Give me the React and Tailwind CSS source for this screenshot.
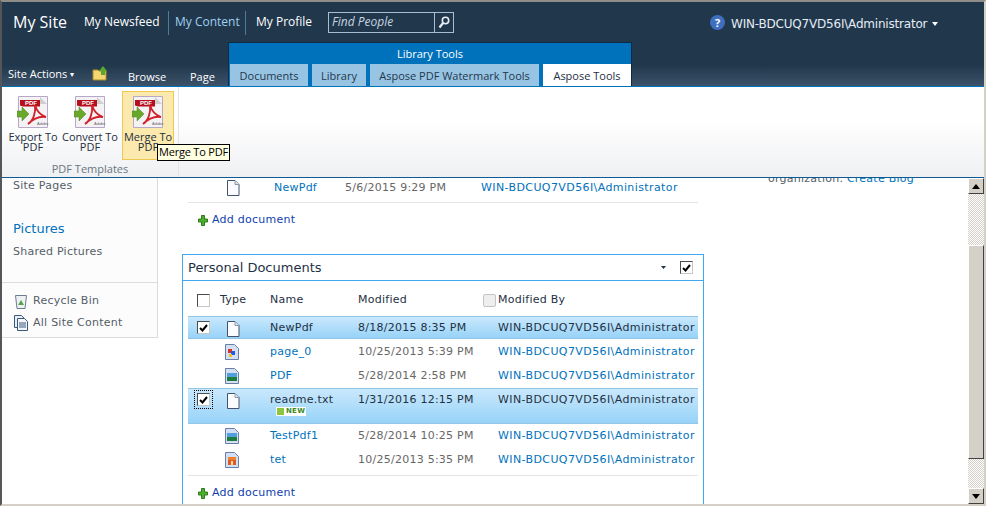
import React from 'react';

const PdfIcon = () => (
  <svg width="32" height="32" viewBox="0 0 32 32" className="block">
    <path d="M1.500 .5h29v31h-29z" fill="#f4f2f4" stroke="#b7a8c8" />
    <path d="M23 1l7 7h-7z" fill="#cfcfcf" />
    <path d="M3 4h20v6.500H6l-3-1z" fill="#b50f1c" />
    <text x="8" y="9" fontSize="6" fontWeight="700" fill="#fff" fontFamily="Liberation Sans, sans-serif">PDF</text>
    <path d="M11 28c5-3 8-11 7-19 2 7 5 10 11 12-6-1-12 1-18 7z" fill="none" stroke="#d0202a" strokeWidth="1.800" />
    <path d="M0 15h5v-4l7 7-7 7v-4H0z" fill="#6aa82c" stroke="#4d8a1c" strokeWidth=".5" />
    <text x="20" y="29" fontSize="4" fill="#666" fontFamily="Liberation Sans, sans-serif">Adobe</text>
  </svg>
);

const BlankFile = () => (
  <svg width="14" height="16" viewBox="0 0 14 16" className="block">
    <path d="M1.500 .5h7.500l4 4v11h-11.500z" fill="#fbfcff" stroke="#44546a" />
    <path d="M9 .5v4h4" fill="#dfe6ee" stroke="#8898ac" />
  </svg>
);

const ImgFile = ({ kind }) => (
  <svg width="14" height="16" viewBox="0 0 14 16" className="block">
    <path d="M.5 .5h9l4 4v11H.5z" fill="#d5dff4" stroke="#6a7fa8" />
    {kind === 'page' && (
      <>
        <rect x="3" y="5" width="4" height="4" fill="#e03020" />
        <rect x="6" y="7" width="4" height="4" fill="#2060e0" />
        <rect x="4" y="10" width="3" height="3" fill="#f0c020" />
      </>
    )}
    {kind === 'land' && (
      <>
        <rect x="2" y="5" width="10" height="4" fill="#50a0e0" />
        <rect x="2" y="9" width="10" height="4" fill="#1c7c3c" />
      </>
    )}
    {kind === 'tet' && (
      <>
        <rect x="3" y="5" width="8" height="3" fill="#f08030" />
        <rect x="3" y="8" width="8" height="5" fill="#d85c20" />
        <rect x="6" y="9" width="2" height="4" fill="#f5d8b0" />
      </>
    )}
  </svg>
);

const Plus = () => (
  <svg width="10" height="11" viewBox="0 0 10 11" className="block">
    <path d="M3.500 .5h3v3.500h3v3h-3v3.500h-3v-3.500h-3v-3h3z" fill="#4cae2c" stroke="#2f7d1a" />
  </svg>
);

const Check = ({ on }) => (
  <span className="w-[13px] h-[13px] bg-white border border-[#4c4c4c] border-r-[#c8c8c0] border-b-[#c8c8c0] flex items-center justify-center">
    {on && (
      <svg width="9" height="8" viewBox="0 0 9 8">
        <path d="M1 4l2.500 2.500L8 1" fill="none" stroke="#000" strokeWidth="2" />
      </svg>
    )}
  </span>
);

const ScrollBtn = ({ up }) => (
  <div className="h-[16px] w-[16px] bg-[#d4d0c8] border border-t-white border-l-white border-r-[#404040] border-b-[#404040] flex items-center justify-center shrink-0">
    <svg width="8" height="5" viewBox="0 0 8 5">
      <path d={up ? 'M4 0l4 5H0z' : 'M0 0h8L4 5z'} fill="#000" />
    </svg>
  </div>
);

const Link = 'text-[#0072bc]';
const AUTHOR = 'WIN-BDCUQ7VD56I\\Administrator';

const docs = [
  { name: 'page_0', date: '10/25/2013 5:39 PM', kind: 'page' },
  { name: 'PDF', date: '5/28/2014 2:58 PM', kind: 'land' },
];
const docs2 = [
  { name: 'TestPdf1', date: '5/28/2014 10:25 PM', kind: 'land' },
  { name: 'tet', date: '10/25/2013 5:35 PM', kind: 'tet' },
];

const PlainRow = ({ d }) => (
  <div className="h-[24px] flex items-center pt-[2px]">
    <div className="w-[37px]" />
    <div className="w-[45px]"><ImgFile kind={d.kind} /></div>
    <div className={`w-[88px] ${Link}`}>{d.name}</div>
    <div className="w-[140px] text-[#676767]">{d.date}</div>
    <div className={`tracking-[0.4px] ${Link}`}>{AUTHOR}</div>
  </div>
);

const SelectedRow = ({ height, name, date, isNew, dotted }) => (
  <div
    style={{ height }}
    className="flex items-start bg-gradient-to-b from-[#c9e8fc] to-[#97d3f8] border-y border-[#92c5e6] text-[#1f3144] pt-[2px]"
  >
    <div className="w-[36px] pl-[9px] pt-[2px]">
      <div className={dotted ? 'outline outline-1 outline-dotted outline-black outline-offset-[2px] w-[13px]' : 'w-[13px]'}>
        <Check on />
      </div>
    </div>
    <div className="w-[46px] pl-[2px] pt-[2px]"><BlankFile /></div>
    <div className="w-[88px]">
      <div className="leading-[18px]">{name}</div>
      {isNew && (
        <div className="-mt-[2px] ml-[6px] w-[30px] h-[9px] bg-white flex items-center gap-[2px] pl-px text-[7px] leading-none font-bold text-[#3c8a1e]">
          <span className="w-[7px] h-[7px] bg-[#8cc63f] shrink-0" />
          NEW
        </div>
      )}
    </div>
    <div className="w-[140px] leading-[18px]">{date}</div>
    <div className="leading-[18px] tracking-[0.4px]">{AUTHOR}</div>
  </div>
);

const Tab = ({ children, active, className }) => (
  <div className={`h-[22px] flex items-center justify-center pt-[2px] text-[11px] ${active ? 'bg-white text-[#1f3144]' : 'bg-[#98c4e4] text-[#23384c]'} ${className}`}>
    {children}
  </div>
);

const RibbonBtn = ({ label, className }) => (
  <div className={`h-[69px] border flex flex-col items-center pt-[4px] text-[11px] leading-[10px] text-[#23303f] ${className}`}>
    <PdfIcon />
    <div className="mt-[4px] text-center whitespace-nowrap">{label}<br />PDF</div>
  </div>
);

export default function App() {
  return (
    <div className="w-[986px] h-[506px] overflow-hidden relative bg-white border-t-2 border-l-2 border-t-[#8f8d87] border-l-[#55565a] border-r-2 border-r-[#d4d0c8] border-b-2 border-b-[#d4d0c8] flex flex-col font-['Open_Sans',sans-serif]">
      {/* top chrome */}
      <div className="h-[85px] shrink-0 bg-[linear-gradient(#21374c_0,#21374c_75%,#3c5268_100%)] border-b border-[#0072bc] flex flex-col text-white">
        <div className="h-[41px] flex items-start pt-[9px] pl-[11px]">
          <span className="text-[16px] leading-[22px] w-[71px]">My Site</span>
          <span className="text-[12px] leading-[22px] w-[84px]">My Newsfeed</span>
          <span className="text-[12px] leading-[22px] text-[#9fd0f0] w-[78px] pl-[6px] border-x border-[#4b7ba0] h-[24px]">My Content</span>
          <span className="text-[12px] leading-[22px] pl-[10px] w-[82px]">My Profile</span>
          <div className="flex h-[21px] mt-px border border-[#a8bed2]">
            <div className="w-[106px] border-r border-[#a8bed2] pl-[3px] text-[12px] italic leading-[18px] text-[#c8d4e0]">Find People</div>
            <div className="w-[18px] flex items-center justify-center">
              <svg width="12" height="13" viewBox="0 0 12 13">
                <circle cx="7.500" cy="4.500" r="3.200" fill="none" stroke="#e8eef4" strokeWidth="1.600" />
                <path d="M5 7L1.500 11.500" stroke="#e8eef4" strokeWidth="2.200" />
              </svg>
            </div>
          </div>
          <div className="ml-[256px] w-[15px] h-[15px] mt-[4px] rounded-full bg-[#3f6fc0] text-[11px] font-bold leading-[15px] text-center text-white shrink-0">?</div>
          <span className="ml-[6px] mt-[2px] text-[12px] leading-[22px] font-['DejaVu_Sans'] tracking-[-0.2px] text-[#e4ecf4] whitespace-nowrap">{AUTHOR}</span>
          <svg width="6" height="4" viewBox="0 0 6 4" className="ml-[5px] mt-[11px]"><path d="M0 0h6L3 4z" fill="#fff" /></svg>
        </div>
        <div className="flex-1 flex items-end">
          <div className="w-[226px] h-[44px] flex items-end text-[11px] pl-[6px]">
            <span className="w-[84px] leading-[18px] pb-[3px]">Site Actions <span className="text-[8px] align-[1px]">▾</span></span>
            <svg width="17" height="15" viewBox="0 0 17 15" className="mb-[5px] shrink-0">
              <path d="M1 4h5l1 1h7v9H1z" fill="#f5d671" stroke="#a88a2c" />
              <path d="M9 9V5H7l4-5 4 5h-2v4z" fill="#58a82c" />
            </svg>
            <span className="ml-[19px] w-[62px] leading-[18px]">Browse</span>
            <span className="leading-[18px]">Page</span>
          </div>
          <div className="w-[404px] h-[44px] bg-[#0072bc] border border-b-0 border-[#0e2a44] flex flex-col">
            <div className="h-[21px] text-center text-[11px] leading-[21px]">Library Tools</div>
            <div className="flex gap-[4px] pl-px">
              <Tab className="w-[78px]">Documents</Tab>
              <Tab className="w-[54px]">Library</Tab>
              <Tab className="w-[169px]">Aspose PDF Watermark Tools</Tab>
              <Tab active className="w-[88px]">Aspose Tools</Tab>
            </div>
          </div>
        </div>
      </div>

      {/* ribbon */}
      <div className="h-[91px] shrink-0 relative z-10 bg-gradient-to-b from-white from-35% to-[#eff0f2] border-b border-[#0e5a94] flex">
        <div className="w-[177px] border-r border-[#e2e3e5] pt-[4px] flex flex-col">
          <div className="flex shrink-0">
            <RibbonBtn label="Export To" className="w-[62px] border-transparent" />
            <RibbonBtn label="Convert To" className="w-[52px] mr-[6px] border-transparent" />
            <RibbonBtn label="Merge To" className="w-[52px] bg-[#fce9ae] border-[#f0c750]" />
          </div>
          <div className="text-center text-[11px] leading-[18px] text-[#6a7682]">PDF Templates</div>
        </div>
        <div className="absolute left-[155px] top-[57px] h-[17px] px-[1px] bg-[#ffffe1] border border-black text-[11px] tracking-[-0.2px] leading-[14px] text-black whitespace-nowrap">Merge To PDF</div>
      </div>

      {/* page */}
      <div className="flex-1 min-h-0 flex font-['DejaVu_Sans',sans-serif] text-[11px] tracking-[0.25px]">
        <div className="w-[156px] shrink-0 h-[160px] bg-[#fcfcfc] border-r border-b border-[#dbdcdd] text-[#555e68]">
          <div className="pl-[11px] pt-[1px] leading-[14px]">Site Pages</div>
          <div className={`pl-[11px] mt-[28px] text-[13px] tracking-normal leading-[16px] ${Link}`}>Pictures</div>
          <div className="pl-[11px] mt-[8px] leading-[14px]">Shared Pictures</div>
          <div className="mt-[23px] border-t border-[#dbdcdd] pt-[9px] pl-[12px]">
            <div className="flex items-center gap-[5px] h-[18px]">
              <svg width="14" height="16" viewBox="0 0 14 16" className="shrink-0">
                <path d="M1.500 2.500h11l-1.500 13h-8z" fill="#eef1f4" stroke="#6a7c90" />
                <path d="M7 7l3 5H4z" fill="#5aa24a" />
              </svg>
              Recycle Bin
            </div>
            <div className="flex items-center gap-[5px] h-[26px]">
              <svg width="14" height="16" viewBox="0 0 14 16" className="shrink-0">
                <path d="M.5 .5h7l3 3v9H.5z" fill="#e6eefa" stroke="#3c5878" />
                <path d="M3.500 3.500h7l3 3v9h-10z" fill="#f2f6fc" stroke="#3c5878" />
                <path d="M5 8h7M5 10h7M5 12h7" stroke="#3c5878" />
              </svg>
              All Site Content
            </div>
          </div>
        </div>

        <div className="flex-1 min-w-0 overflow-hidden pl-[24px] relative">
          <div className="h-[25px] w-[510px] ml-[6px] border-b border-[#e4e4e4] flex items-center pb-[4px]">
            <div className="w-[38px]" />
            <div className="w-[48px]"><BlankFile /></div>
            <div className={`w-[71px] ${Link}`}>NewPdf</div>
            <div className="w-[136px] text-[#676767]">5/6/2015 9:29 PM</div>
            <div className={`tracking-[0.4px] ${Link}`}>{AUTHOR}</div>
          </div>
          <div className="ml-[16px] mt-[9px] h-[16px] flex items-center gap-[4px] text-[#0f3fae]"><Plus />Add document</div>

          <div className="mt-[26px] w-[522px] h-[260px] border border-[#41a9f0] border-b-0">
            <div className="h-[26px] border-b border-[#41a9f0] flex items-center pl-[5px] text-[13px] tracking-normal text-[#1f3144]">
              <span className="flex-1">Personal Documents</span>
              <svg width="5" height="3" viewBox="0 0 5 3" className="mr-[14px]"><path d="M0 0h5L2.500 3z" fill="#1f3144" /></svg>
              <span className="mr-[10px]"><Check on /></span>
            </div>
            <div className="px-[5px]">
              <div className="h-[35px] flex items-center pt-[3px] text-[#1f3144]">
                <div className="w-[32px] pl-[9px]"><Check /></div>
                <div className="w-[50px]">Type</div>
                <div className="w-[88px]">Name</div>
                <div className="w-[125px]">Modified</div>
                <div className="flex items-center gap-[2px]">
                  <span className="w-[13px] h-[13px] rounded-[2px] bg-[#eeeeee] border border-[#c4c4c4]" />
                  Modified By
                </div>
              </div>
              <SelectedRow height={23} name="NewPdf" date="8/18/2015 8:35 PM" />
              <div className="mb-px">
                {docs.map((d) => <PlainRow key={d.name} d={d} />)}
              </div>
              <SelectedRow height={36} name="readme.txt" date="1/31/2016 12:15 PM" isNew dotted />
              <div className="-mt-px">
                {docs2.map((d) => <PlainRow key={d.name} d={d} />)}
              </div>
              <div className="mt-[4px] border-t border-[#e4e4e4] pt-[9px] pl-[10px] h-[16px] flex items-center gap-[4px] text-[#0f3fae] box-content">
                <Plus />Add document
              </div>
            </div>
          </div>

          <div className="absolute left-[610px] top-[-6px] leading-[14px] text-[#555e68] whitespace-nowrap">
            organization. <span className={Link}>Create Blog</span>
          </div>
        </div>

        {/* scrollbar */}
        <div className="w-[16px] shrink-0 flex flex-col">
          <ScrollBtn up />
          <div className="h-[51px] bg-[repeating-conic-gradient(#d4d0c8_0_25%,#ffffff_0_50%)] bg-[length:2px_2px]" />
          <div className="h-[214px] bg-[#d4d0c8] border border-t-white border-l-white border-r-[#404040] border-b-[#404040]" />
          <div className="flex-1 bg-[repeating-conic-gradient(#d4d0c8_0_25%,#ffffff_0_50%)] bg-[length:2px_2px]" />
          <ScrollBtn />
        </div>
      </div>
    </div>
  );
}
